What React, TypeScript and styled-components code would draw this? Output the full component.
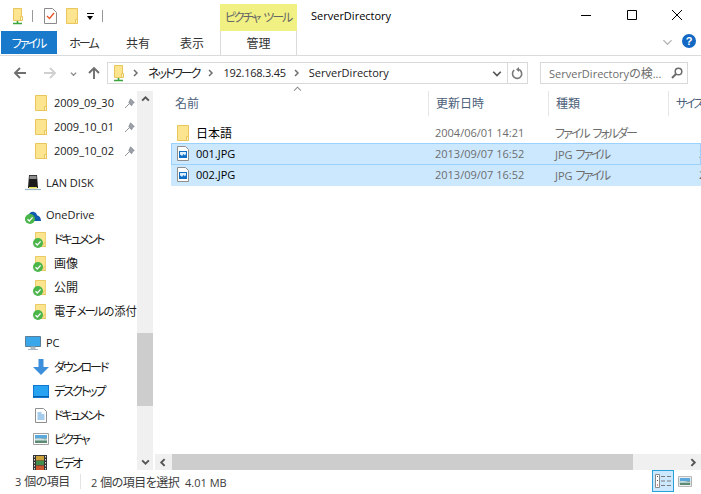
import React from "react";
import styled, { createGlobalStyle } from "styled-components";

const GlobalStyle = createGlobalStyle`
  html, body { margin: 0; padding: 0; background: #fff; }
  * { box-sizing: border-box; }
  body { font-family: "Open Sans", "Noto Sans CJK JP", sans-serif; font-size: 11px; color: #000; }
`;

/* Latin runs stay at 11px, Japanese runs get 12px, katakana is set tighter like the UI font */
const Jp = styled.span`
  font-family: "Noto Sans CJK JP", sans-serif;
  font-size: 12px;
  font-feature-settings: "palt";
`;

const Kana = styled(Jp)`
  letter-spacing: -2px;
  margin-right: 1px;
`;

const T = ({ children }: { children: string }) => (
  <>
    {children.split(/([\u3000-\u9fff\uff00-\uffef]+)/).map((run, i) =>
      i % 2 ? (
        run.split(/([\u30a0-\u30ff]+)/).map((part, j) =>
          part ? j % 2 ? <Kana key={`${i}-${j}`}>{part}</Kana> : <Jp key={`${i}-${j}`}>{part}</Jp> : null
        )
      ) : (
        run
      )
    )}
  </>
);

/* ---------- icons ---------- */
const Folder = ({ h = 16 }: { h?: number }) => (
  <svg width={(h * 12) / 16} height={h} viewBox="0 0 12 16">
    <path d="M.5.5h11v15H.5z" fill="#fde58f" stroke="#e8c65d" />
    <path d="M9.5 11.5h2v4h-2z" fill="#fff2bd" stroke="#e8c65d" />
  </svg>
);

const NetFolder = () => (
  <svg width="12" height="17" viewBox="0 0 12 17">
    <path d="M1.5.5h8v12h-8z" fill="#fde58f" stroke="#e8c65d" />
    <path d="M8.5 8.5h2v4h-2z" fill="#fff2bd" stroke="#e8c65d" />
    <path d="M5.5 13v2M1 15.5h9" stroke="#3ca43c" strokeWidth="1.6" />
  </svg>
);

const CheckDoc = () => (
  <svg width="13" height="16" viewBox="0 0 13 16">
    <path d="M.5.5h8l4 4v11H.5z" fill="#fff" stroke="#8a8a8a" />
    <path d="M3 8l2.5 2.5L10 5" fill="none" stroke="#e8562a" strokeWidth="1.4" />
  </svg>
);

const Chev = ({ dir, color = "#6f6f6f", size = 8, w = 1.5 }: { dir: "r" | "d" | "u" | "l"; color?: string; size?: number; w?: number }) => {
  const pts = { r: "3,1 6,4 3,7", l: "5,1 2,4 5,7", d: "1,3 4,6 7,3", u: "1,5 4,2 7,5" }[dir];
  return (
    <svg width={size} height={size} viewBox="0 0 8 8">
      <polyline points={pts} fill="none" stroke={color} strokeWidth={w} />
    </svg>
  );
};

const NavArrow = ({ dir, color }: { dir: "l" | "r" | "u"; color: string }) => {
  const d = {
    l: "M13 7H2M7 2L2 7l5 5",
    r: "M1 7h11M7 2l5 5-5 5",
    u: "M7 13V2M2 7l5-5 5 5",
  }[dir];
  return (
    <svg width="14" height="14" viewBox="0 0 14 14">
      <path d={d} fill="none" stroke={color} strokeWidth="1.9" />
    </svg>
  );
};

const Pin = () => (
  <svg width="11" height="11" viewBox="0 0 11 11">
    <path d="M6.5.8l3.7 3.7-1.2.6-1.4 2.6L4.8 5 6 2.2zM5 6l-4 4" fill="#9aa0a6" stroke="#8d949b" strokeWidth="1" />
  </svg>
);

const SyncBadge = ({ cloud }: { cloud?: boolean }) => (
  <Badge $cloud={cloud} viewBox="0 0 10 10" width="10" height="10">
    <circle cx="5" cy="5" r="5" fill="#49b54a" />
    <path d="M2.5 5.2l1.8 1.8 3.3-3.6" fill="none" stroke="#fff" strokeWidth="1.3" />
  </Badge>
);

const SyncFolder = () => (
  <IconWrap>
    <Folder h={15} />
    <SyncBadge />
  </IconWrap>
);

const LanDisk = () => (
  <svg width="16" height="16" viewBox="0 0 16 16">
    <path d="M4 0h8l1 13H3z" fill="#1c1c1c" />
    <path d="M4.5.8h7l.1 3.2h-7.2z" fill="#8e8e8e" />
    <path d="M4 12h8v1.5H4z" fill="#e8e05a" />
    <path d="M0 14.5h16" stroke="#9bb7cc" strokeWidth="1.2" />
  </svg>
);

const Cloud = () => (
  <IconWrap>
    <svg width="16" height="11" viewBox="0 0 16 11">
      <path d="M1 11c-1.5-2 0-4.5 2-4.5C4 3 6.500 1 9 2c2 .6 3 2 3 3.500 2.500 0 4 2.500 4 5.500z" fill="#0f5cae" />
    </svg>
    <SyncBadge cloud />
  </IconWrap>
);

const Monitor = () => (
  <svg width="16" height="15" viewBox="0 0 16 15">
    <path d="M.5.500h15v10H.5z" fill="#39a7ea" stroke="#5c7e97" />
    <path d="M6 11h4v2H6zM3 13.500h10" fill="#b8c4cc" stroke="#a9b6bf" />
  </svg>
);

const Download = () => (
  <svg width="16" height="16" viewBox="0 0 16 16">
    <path d="M5.500 0h5v8H16l-8 8-8-8h5.500z" fill="#3d8fdc" />
  </svg>
);

const Desktop = () => (
  <svg width="16" height="13" viewBox="0 0 16 13">
    <path d="M0 0h16v13H0z" fill="#0f78d4" />
    <path d="M1 1h14v10H1z" fill="#27a3f2" />
    <path d="M0 11.500h16" stroke="#0a5ea8" />
  </svg>
);

const DocLines = () => (
  <svg width="12" height="15" viewBox="0 0 12 15">
    <path d="M.5.500h8l3 3v11H.5z" fill="#fff" stroke="#8f8f8f" />
    <path d="M2.500 5h4M2.500 7h7M2.500 9h7M2.500 11h7" stroke="#4b98d8" />
  </svg>
);

const Picture = ({ w = 16, h = 12 }: { w?: number; h?: number }) => (
  <svg width={w} height={h} viewBox="0 0 16 12">
    <path d="M.5.500h15v11H.5z" fill="#fff" stroke="#a0a0a0" />
    <path d="M2 2h12v3.500H2z" fill="#5aa8dc" />
    <path d="M2 5.500h12V10H2z" fill="#5d8a73" />
    <path d="M2 6c4-1.500 8 1 12 0v1.500H2z" fill="#cfe3ea" />
  </svg>
);

const Film = () => (
  <svg width="14" height="16" viewBox="0 0 14 16">
    <path d="M0 0h14v16H0z" fill="#333" />
    <path d="M3 1h8v4.500H3z" fill="#c9a03a" />
    <path d="M3 6h8v4H3z" fill="#3f8f4f" />
    <path d="M3 10.500h8V15H3z" fill="#c9552f" />
    <path d="M1.500 1v14M12.500 1v14" stroke="#ddd" strokeDasharray="1.500 1.500" />
  </svg>
);

const JpgIcon = () => (
  <svg width="12" height="15" viewBox="0 0 12 15">
    <path d="M.5.500h8l3 3v11H.5z" fill="#fff" stroke="#8f8f8f" />
    <path d="M2 5h8v7H2z" fill="#0f6fc6" />
    <path d="M3 6h6v2l-1 1.500L6.500 8 5 10 3.500 8.500 3 9z" fill="#dcefff" />
  </svg>
);

const Refresh = () => (
  <svg width="13" height="13" viewBox="0 0 13 13">
    <path d="M8 2.600A4.600 4.600 0 1 1 3.200 3.200" fill="none" stroke="#7a7a7a" strokeWidth="1.600" />
    <path d="M5 0v5L2 2.500z" transform="translate(3 0)" fill="#7a7a7a" />
  </svg>
);

const Search = () => (
  <svg width="12" height="12" viewBox="0 0 12 12">
    <circle cx="7.500" cy="4.500" r="3.300" fill="none" stroke="#6b6b6b" strokeWidth="1.500" />
    <path d="M5 7l-4 4" stroke="#6b6b6b" strokeWidth="2" />
  </svg>
);

const DetailsView = () => (
  <svg width="16" height="14" viewBox="0 0 16 14">
    <path d="M.5.500h4v13h-4z" fill="#fff" stroke="#8a8a8a" />
    <path d="M2 2h1v1H2zM2 6h1v1H2z" fill="#555" />
    <path d="M2 10.500h1v1H2z" fill="#d3262c" />
    <path d="M6 2.500h4M12 2.500h4M6 7h4M12 7h4M6 11.500h4M12 11.500h4" stroke="#7a7a7a" />
  </svg>
);

/* ---------- data ---------- */
type NavItem = { label: string; icon: React.ReactNode; indent?: boolean; gap?: boolean; pin?: boolean; wide?: boolean; tight?: boolean };

const navItems: NavItem[] = [
  { label: "2009_09_30", icon: <Folder />, indent: true, pin: true },
  { label: "2009_10_01", icon: <Folder />, indent: true, pin: true },
  { label: "2009_10_02", icon: <Folder />, indent: true, pin: true },
  { label: "LAN DISK", icon: <LanDisk />, gap: true },
  { label: "OneDrive", icon: <Cloud />, gap: true },
  { label: "ドキュメント", icon: <SyncFolder />, indent: true },
  { label: "画像", icon: <SyncFolder />, indent: true },
  { label: "公開", icon: <SyncFolder />, indent: true },
  { label: "電子メールの添付", icon: <SyncFolder />, indent: true, tight: true },
  { label: "PC", icon: <Monitor />, gap: true },
  { label: "ダウンロード", icon: <Download />, indent: true, wide: true },
  { label: "デスクトップ", icon: <Desktop />, indent: true, wide: true },
  { label: "ドキュメント", icon: <DocLines />, indent: true },
  { label: "ピクチャ", icon: <Picture />, indent: true, wide: true },
  { label: "ビデオ", icon: <Film />, indent: true, wide: true },
];

const files = [
  { name: "日本語", date: "2004/06/01 14:21", type: "ファイル フォルダー", size: "", icon: <Folder h={16} />, selected: false, focused: false },
  { name: "001.JPG", date: "2013/09/07 16:52", type: "JPG ファイル", size: "2", icon: <JpgIcon />, selected: true, focused: true },
  { name: "002.JPG", date: "2013/09/07 16:52", type: "JPG ファイル", size: "2", icon: <JpgIcon />, selected: true, focused: false },
];

/* ---------- page ---------- */
export default function App() {
  return (
    <>
      <GlobalStyle />
      <Window>
        <TitleBar>
          <QuickAccess>
            <NetFolder />
            <QuickSep />
            <CheckDoc />
            <QuickFolder>
              <Folder />
            </QuickFolder>
            <QuickDrop>
              <i />
              <b />
            </QuickDrop>
            <QuickSep />
          </QuickAccess>
          <ContextTab>
            <T>ピクチャ ツール</T>
          </ContextTab>
          <WindowTitle>ServerDirectory</WindowTitle>
          <WindowButtons>
            <WinButton>
              <svg width="10" height="10" viewBox="0 0 10 10">
                <path d="M0 5.500h10" stroke="#000" />
              </svg>
            </WinButton>
            <WinButton>
              <svg width="10" height="10" viewBox="0 0 10 10">
                <path d="M.5.500h9v9h-9z" fill="none" stroke="#000" />
              </svg>
            </WinButton>
            <WinButton>
              <svg width="10" height="10" viewBox="0 0 10 10">
                <path d="M0 0l10 10M10 0L0 10" stroke="#000" />
              </svg>
            </WinButton>
          </WindowButtons>
        </TitleBar>

        <Ribbon>
          <FileTab>
            <T>ファイル</T>
          </FileTab>
          <RibbonTab>
            <T>ホーム</T>
          </RibbonTab>
          <RibbonTab>
            <T>共有</T>
          </RibbonTab>
          <RibbonTab>
            <T>表示</T>
          </RibbonTab>
          <ManageTab>
            <T>管理</T>
          </ManageTab>
          <RibbonRight>
            <Chev dir="d" color="#b5b5b5" size={11} w={0.9} />
            <Help>?</Help>
          </RibbonRight>
        </Ribbon>

        <AddressRow>
          <NavButtons>
            <NavArrow dir="l" color="#6f6f6f" />
            <NavArrow dir="r" color="#d0d0d0" />
            <Chev dir="d" color="#8a8a8a" size={7} />
            <NavArrow dir="u" color="#6f6f6f" />
          </NavButtons>
          <AddressBox>
            <NetFolder />
            <Crumbs>
              <CrumbSep>
                <Chev dir="r" />
              </CrumbSep>
              <span>
                <T>ネットワーク</T>
              </span>
              <CrumbSep>
                <Chev dir="r" />
              </CrumbSep>
              <IpCrumb>192.168.3.45</IpCrumb>
              <CrumbSep>
                <Chev dir="r" />
              </CrumbSep>
              <span>ServerDirectory</span>
            </Crumbs>
            <AddressDrop>
              <Chev dir="d" color="#555" size={10} w={1.4} />
            </AddressDrop>
            <RefreshCell>
              <Refresh />
            </RefreshCell>
          </AddressBox>
          <SearchBox>
            <SearchText>
              <T>ServerDirectoryの検...</T>
            </SearchText>
            <Search />
          </SearchBox>
        </AddressRow>

        <Body>
          <NavPane>
            <NavList>
              {navItems.map((item, i) => (
                <NavRow key={i} $indent={item.indent} $gap={item.gap}>
                  <NavIcon $indent={item.indent} $wide={item.wide}>
                    {item.icon}
                  </NavIcon>
                  <NavLabel $tight={item.tight}>
                    <T>{item.label}</T>
                  </NavLabel>
                  {item.pin && (
                    <PinSlot>
                      <Pin />
                    </PinSlot>
                  )}
                </NavRow>
              ))}
            </NavList>
            <VScroll>
              <ScrollArrow>
                <Chev dir="u" color="#555" size={9} w={1.7} />
              </ScrollArrow>
              <VTrack>
                <VThumb />
              </VTrack>
              <ScrollArrow>
                <Chev dir="d" color="#555" size={9} w={1.7} />
              </ScrollArrow>
            </VScroll>
          </NavPane>

          <FilePane>
            <SortMark>
              <Chev dir="u" color="#8a8a8a" size={9} w={0.9} />
            </SortMark>
            <ColumnHeader>
              <HeaderCell $w={260}>
                <T>名前</T>
              </HeaderCell>
              <HeaderCell $w={120}>
                <T>更新日時</T>
              </HeaderCell>
              <HeaderCell $w={120}>
                <T>種類</T>
              </HeaderCell>
              <HeaderCell $w={40}>
                <T>サイズ</T>
              </HeaderCell>
            </ColumnHeader>
            <FileList>
              {files.map((f) => (
                <FileRow key={f.name} $selected={f.selected} $focused={f.focused}>
                  <NameCell>
                    <FileIcon>{f.icon}</FileIcon>
                    <T>{f.name}</T>
                  </NameCell>
                  <DataCell $w={120}>{f.date}</DataCell>
                  <DataCell $w={144}>
                    <T>{f.type}</T>
                  </DataCell>
                  <DataCell $w={10}>{f.size}</DataCell>
                </FileRow>
              ))}
            </FileList>
            <HScroll>
              <HArrow>
                <Chev dir="l" color="#555" size={9} w={1.7} />
              </HArrow>
              <HThumb />
              <HArrow>
                <Chev dir="r" color="#555" size={9} w={1.7} />
              </HArrow>
            </HScroll>
          </FilePane>
        </Body>

        <StatusBar>
          <StatusCount>
            <T>3 個の項目</T>
          </StatusCount>
          <StatusSelection>
            <T>2 個の項目を選択</T>
            &nbsp;&nbsp;4.01 MB
          </StatusSelection>
          <ViewButtons>
            <ViewButton $active>
              <DetailsView />
            </ViewButton>
            <ViewButton>
              <Picture w={14} h={11} />
            </ViewButton>
          </ViewButtons>
        </StatusBar>
      </Window>
    </>
  );
}

const Window = styled.div`
  width: 701px;
  height: 494px;
  display: flex;
  flex-direction: column;
  overflow: hidden;
  background: #fff;
`;

const TitleBar = styled.header`
  height: 31px;
  padding-top: 4px;
  display: flex;
  align-items: stretch;
`;

const QuickAccess = styled.div`
  width: 220px;
  padding: 4px 0 0 12px;
  display: flex;
  align-items: flex-start;
`;

const QuickSep = styled.span`
  width: 1px;
  height: 12px;
  margin: 2px 11px 0 8px;
  background: #9a9a9a;
`;

const QuickFolder = styled.span`
  margin-left: 9px;
  display: flex;
`;

const QuickDrop = styled.span`
  width: 7px;
  margin: 5px 0 0 9px;
  display: flex;
  flex-direction: column;
  gap: 2px;
  i {
    display: block;
    height: 1px;
    background: #000;
  }
  b {
    display: block;
    width: 0;
    height: 0;
    border: 3.5px solid transparent;
    border-top: 4px solid #000;
    border-bottom: 0;
  }
`;

const ContextTab = styled.div`
  width: 77px;
  background: #f1f083;
  color: #666;
  text-align: center;
  line-height: 26px;
  white-space: nowrap;
`;

const WindowTitle = styled.div`
  margin-left: 14px;
  line-height: 24px;
`;

const WindowButtons = styled.div`
  margin-left: auto;
  display: flex;
  padding-right: 1px;
  margin-top: -4px;
`;

const WinButton = styled.div`
  width: 45.500px;
  height: 30px;
  display: flex;
  align-items: center;
  justify-content: center;
`;

const Ribbon = styled.nav`
  height: 25px;
  padding-left: 1px;
  display: flex;
  border-bottom: 1px solid #dadbdc;
`;

const FileTab = styled.div`
  width: 56px;
  height: 23px;
  background: #1979ca;
  color: #fff;
  text-align: center;
  line-height: 23px;
`;

const RibbonTab = styled.div`
  width: 54px;
  height: 23px;
  text-align: center;
  line-height: 23px;
  color: #333;
`;

const ManageTab = styled.div`
  width: 77px;
  margin-left: 1px;
  height: 24px;
  text-align: center;
  line-height: 23px;
  color: #333;
  border-left: 1px solid #dadbdc;
  border-right: 1px solid #dadbdc;
`;

const RibbonRight = styled.div`
  margin-left: auto;
  width: 39px;
  padding: 0 5px 4px 0;
  display: flex;
  align-items: center;
  justify-content: space-between;
`;

const Help = styled.div`
  width: 14px;
  height: 14px;
  border-radius: 50%;
  background: #1268c3;
  color: #fff;
  font: bold 11px/14px "Liberation Sans", sans-serif;
  text-align: center;
`;

const AddressRow = styled.div`
  height: 29px;
  padding: 6px 0 1px;
  display: flex;
  align-items: stretch;
`;

const NavButtons = styled.div`
  width: 107px;
  padding-left: 5px;
  display: grid;
  grid-template-columns: 30px 30px 16px 26px;
  align-items: center;
  justify-items: center;
`;

const AddressBox = styled.div`
  width: 421px;
  padding-left: 5px;
  display: flex;
  align-items: center;
  border: 1px solid #d9d9d9;
`;

const Crumbs = styled.div`
  flex: 1;
  display: flex;
  align-items: center;
  color: #222;
  white-space: nowrap;
  padding-bottom: 2px;
`;

const CrumbSep = styled.span`
  display: flex;
  margin: 2px 9px 0 6px;
`;

const IpCrumb = styled.span`
  letter-spacing: -0.25px;
`;

const AddressDrop = styled.div`
  width: 21px;
  display: flex;
  justify-content: center;
`;

const RefreshCell = styled.div`
  width: 20px;
  align-self: stretch;
  display: flex;
  align-items: center;
  justify-content: center;
  border-left: 1px solid #d9d9d9;
`;

const SearchBox = styled.div`
  width: 148px;
  margin-left: 12px;
  padding: 0 4px 0 8px;
  display: flex;
  align-items: center;
  justify-content: space-between;
  border: 1px solid #d9d9d9;
`;

const SearchText = styled.span`
  color: #6d6d6d;
  white-space: nowrap;
  margin-bottom: 1px;
`;

const Body = styled.main`
  flex: 1;
  min-height: 0;
  display: flex;
`;

const NavPane = styled.aside`
  width: 155px;
  padding-top: 6px;
  display: flex;
`;

const NavList = styled.div`
  width: 137px;
  overflow: hidden;
`;

const NavRow = styled.div<{ $indent?: boolean; $gap?: boolean }>`
  height: 24px;
  margin-top: ${(p) => (p.$gap ? 8 : 0)}px;
  padding-left: ${(p) => (p.$indent ? 35 : 25)}px;
  display: flex;
  align-items: center;
  white-space: nowrap;
  color: #1a1a1a;
`;

const NavIcon = styled.span<{ $indent?: boolean; $wide?: boolean }>`
  width: ${(p) => (p.$indent ? 19 : 21)}px;
  flex: none;
  display: flex;
  align-items: center;
  & > svg {
    margin-left: ${(p) => (p.$wide ? -2 : 0)}px;
  }
`;

const NavLabel = styled.span<{ $tight?: boolean }>`
  flex: none;
  margin-bottom: 2px;
  transform-origin: left center;
  transform: ${(p) => (p.$tight ? "scaleX(0.94)" : "none")};
`;

const PinSlot = styled.span`
  margin-left: 10px;
  display: flex;
`;

const IconWrap = styled.span`
  position: relative;
  display: inline-flex;
`;

const Badge = styled.svg<{ $cloud?: boolean }>`
  position: absolute;
  left: ${(p) => (p.$cloud ? 0 : -2)}px;
  bottom: ${(p) => (p.$cloud ? -3 : -1)}px;
`;

const VScroll = styled.div`
  width: 16px;
  background: #f0f0f0;
  display: flex;
  flex-direction: column;
`;

const ScrollArrow = styled.div`
  height: 17px;
  display: flex;
  align-items: center;
  justify-content: center;
`;

const VTrack = styled.div`
  flex: 1;
  padding-top: 225px;
`;

const VThumb = styled.div`
  height: 73px;
  background: #cdcdcd;
`;

const FilePane = styled.section`
  flex: 1;
  min-width: 0;
  padding-top: 6px;
  display: flex;
  flex-direction: column;
  position: relative;
`;

const SortMark = styled.span`
  position: absolute;
  left: 138px;
  top: 0;
  display: flex;
`;

const ColumnHeader = styled.div`
  height: 25px;
  flex: none;
  padding-left: 13px;
  display: flex;
  color: #4c607a;
  overflow: hidden;
`;

const HeaderCell = styled.div<{ $w: number }>`
  width: ${(p) => p.$w}px;
  flex: none;
  padding-left: 7px;
  line-height: 23px;
  white-space: nowrap;
  & + & {
    border-left: 1px solid #e5e5e5;
  }
`;

const FileList = styled.div`
  flex: 1;
  padding: 6px 0 0 16px;
`;

const FileRow = styled.div<{ $selected?: boolean; $focused?: boolean }>`
  height: ${(p) => (p.$focused ? 22 : 21)}px;
  display: flex;
  align-items: center;
  white-space: nowrap;
  overflow: hidden;
  background: ${(p) => (p.$selected ? "#cce8ff" : "transparent")};
  padding: 0 0 ${(p) => (p.$selected ? 2 : 0)}px ${(p) => (p.$focused ? 0 : 1)}px;
  border: ${(p) => (p.$focused ? "1px solid #99d1ff" : "0")};
`;

const NameCell = styled.div`
  width: 263px;
  flex: none;
  display: flex;
  align-items: center;
  padding-left: 5px;
`;

const FileIcon = styled.span`
  width: 19px;
  display: flex;
  align-items: center;
`;

const DataCell = styled.div<{ $w: number }>`
  width: ${(p) => p.$w}px;
  flex: none;
  color: #6d6d6d;
`;

const HScroll = styled.div`
  height: 16px;
  flex: none;
  background: #f0f0f0;
  display: flex;
`;

const HArrow = styled.div`
  width: 17px;
  display: flex;
  align-items: center;
  justify-content: center;
  &:last-child {
    margin-left: auto;
  }
`;

const HThumb = styled.div`
  width: 461px;
  background: #cdcdcd;
`;

const StatusBar = styled.footer`
  height: 24px;
  flex: none;
  padding: 0 0 2px 15px;
  display: flex;
  align-items: center;
  color: #3c3c3c;
  ${Jp} {
    letter-spacing: -0.5px;
  }
`;

const StatusCount = styled.span`
  width: 66px;
  border-right: 1px solid #e3e3e3;
  line-height: 14px;
`;

const StatusSelection = styled.span`
  margin-left: 10px;
`;

const ViewButtons = styled.div`
  margin-left: auto;
  margin-right: 5px;
  display: flex;
  align-self: flex-start;
`;

const ViewButton = styled.div<{ $active?: boolean }>`
  width: 22px;
  height: 22px;
  display: flex;
  align-items: center;
  justify-content: center;
  background: ${(p) => (p.$active ? "#cce8ff" : "transparent")};
  border: 1px solid ${(p) => (p.$active ? "#2aa0da" : "transparent")};
`;
